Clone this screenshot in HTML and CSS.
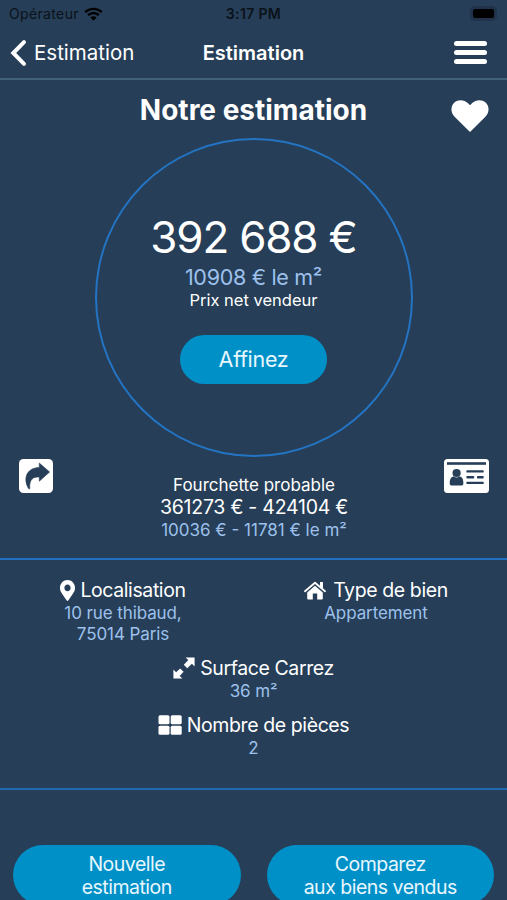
FILE: index.html
```html
<!DOCTYPE html>
<html lang="fr">
<head>
    <meta charset="UTF-8">
    <meta name="viewport" content="width=device-width, initial-scale=1.0">
    <title>Estimation</title>
    <link rel="stylesheet" href="styles.css">
</head>
<body>

<div class="status-bar">
    <div class="operator">
        <span>Opérateur</span>
        <svg width="19" height="14" viewBox="0 0 19 14">
            <path d="M1.2 5.2a12 12 0 0 1 16.6 0M4.1 8.2a7.8 7.8 0 0 1 10.8 0" fill="none" stroke="#000" stroke-width="2.4"/>
            <path d="M9.5 13.8l-3.1-3.2a4.5 4.5 0 0 1 6.2 0z"/>
        </svg>
    </div>
    <span class="time">3:17 PM</span>
    <div class="battery"><div class="battery-level"></div></div>
</div>

<nav class="navbar">
    <a class="back">
        <svg width="18" height="28" viewBox="0 0 18 28">
            <path d="M15 3.2L4.3 14 15 24.8" fill="none" stroke="#fff" stroke-width="4" stroke-linecap="round" stroke-linejoin="miter"/>
        </svg>
        <span>Estimation</span>
    </a>
    <span class="nav-title">Estimation</span>
    <div class="menu"><i></i><i></i><i></i></div>
</nav>

<header class="title-row">
    <h1>Notre estimation</h1>
    <svg class="heart" width="38" height="32" viewBox="0 0 38 32">
        <path d="M19 32L3.6 16.8C-.7 12.4-.4 5.8 3.4 2.5 7.4-1 13.3-.4 17 3.3L19 5.3l2-2C24.7-.4 30.6-1 34.6 2.5c3.8 3.3 4.1 9.9-.2 14.3z" fill="#fff"/>
    </svg>
</header>

<div class="circle">
    <div class="price">392 688 €</div>
    <div class="price-m2">10908 € le m²</div>
    <div class="net">Prix net vendeur</div>
    <button class="btn refine">Affinez</button>
</div>

<section class="range">
    <svg width="34" height="34" viewBox="0 0 34 34">
        <rect width="34" height="34" rx="4.5" fill="#fff"/>
        <path d="M20.3 4.1L30.6 13 20.3 22.2V18C14.5 17.6 10 20 10.8 29.7H9.7C4 20.5 6.8 8.8 20.3 8.4z" fill="#263e57" stroke="#263e57" stroke-width=".6" stroke-linejoin="round"/>
    </svg>
    <div class="range-text">
        <div class="range-label">Fourchette probable</div>
        <div class="range-price">361273 € - 424104 €</div>
        <div class="range-m2">10036 € - 11781 € le m²</div>
    </div>
    <svg width="45" height="34" viewBox="0 0 45 34">
        <rect width="45" height="34" rx="3.5" fill="#fff"/>
        <g fill="#263e57">
            <rect x="3" y="3.2" width="39" height="2.6"/>
            <path d="M5.7 24.5c0-4.5 1.5-7 4.3-7 1.6 1.2 3.6 1.2 5.2 0 2.8 0 4.2 2.5 4.2 7 0 1.3-.9 2.1-2 2.1H7.8c-1.2 0-2.1-.8-2.1-2.1z"/>
            <circle cx="12.6" cy="14" r="4.1"/>
            <rect x="22.4" y="11.2" width="17.3" height="2.4" rx=".7"/>
            <rect x="22.4" y="17" width="7.8" height="2.4" rx=".7"/>
            <rect x="33" y="17" width="6.7" height="2.4" rx=".7"/>
            <rect x="22.4" y="22.7" width="17.3" height="2.4" rx=".7"/>
        </g>
    </svg>
</section>

<section class="details">
    <div class="columns">
        <div class="detail">
            <h2>
                <svg width="15" height="21" viewBox="0 0 384 512" preserveAspectRatio="none">
                    <path d="M172.268 501.67C26.97 291.031 0 269.413 0 192 0 85.961 85.961 0 192 0s192 85.961 192 192c0 77.413-26.97 99.031-172.268 309.67-9.535 13.774-29.93 13.773-39.464 0zM192 272c44.183 0 80-35.817 80-80s-35.817-80-80-80-80 35.817-80 80 35.817 80 80 80z" fill="#fff"/>
                </svg>
                <span>Localisation</span>
            </h2>
            <p>10 rue thibaud,<br>75014 Paris</p>
        </div>
        <div class="detail">
            <h2 class="type">
                <svg width="22" height="19" viewBox="0 0 22 19" fill="#fff">
                    <path d="M11 4.8L18.8 11.5V17.5q0 1-1 1H13.2V12.5H8.8V18.5H4.2q-1 0-1-1V11.5z"/>
                    <path d="M1 10.2L11 1.7 21 10.2" fill="none" stroke="#fff" stroke-width="1.8" stroke-linecap="round" stroke-linejoin="round"/>
                    <path d="M16 1h3v7l-3-2.5z"/>
                </svg>
                <span>Type de bien</span>
            </h2>
            <p>Appartement</p>
        </div>
    </div>
    <div class="detail">
        <h2>
            <svg width="22" height="22" viewBox="0 0 22 22" fill="#fff">
                <path d="M12.6.4H21.6V9.4L18.9 6.7 14.2 11.2 10.8 7.8 15.3 3.1z"/>
                <path d="M9.4 21.6H.4V12.6L3.1 15.3 7.2 11.4 10.6 14.8 6.7 18.9z"/>
            </svg>
            <span>Surface Carrez</span>
        </h2>
        <p>36 m²</p>
    </div>
    <div class="detail">
        <h2>
            <svg width="24" height="20" viewBox="0 0 24 20" fill="#fff">
                <rect x=".5" y=".3" width="11" height="9" rx="1.5"/>
                <rect x="12.7" y=".3" width="11" height="9" rx="1.5"/>
                <rect x=".5" y="10.8" width="11" height="9" rx="1.5"/>
                <rect x="12.7" y="10.8" width="11" height="9" rx="1.5"/>
            </svg>
            <span>Nombre de pièces</span>
        </h2>
        <p>2</p>
    </div>
</section>

<div class="actions">
    <button class="btn">Nouvelle<br>estimation</button>
    <button class="btn">Comparez<br>aux biens vendus</button>
</div>

</body>
</html>
```
FILE: styles.css
```css
* {
    box-sizing: border-box;
}

body {
    margin: 0;
    height: 900px;
    overflow: hidden;
    background: #263e57;
    color: #fff;
    font-family: Inter, "Liberation Sans", sans-serif;
    text-align: center;
}

h1, h2, p {
    margin: 0;
}

svg {
    display: block;
    flex-shrink: 0;
}

.status-bar {
    display: grid;
    grid-template-columns: 1fr auto 1fr;
    align-items: center;
    height: 27px;
    padding: 0 9px;
    color: #0b121a;
    font-size: 14px;
    letter-spacing: 0.35px;
}

.operator {
    display: flex;
    align-items: center;
    gap: 5px;
}

.time {
    font-weight: 600;
}

.battery {
    justify-self: end;
    width: 27px;
    height: 15px;
    padding: 3px;
    margin: -1px 1px 0 0;
    border-radius: 5px;
    background: #20334a;
}

.battery-level {
    height: 9px;
    border-radius: 2px;
    background: #000;
}

.navbar {
    display: grid;
    grid-template-columns: 1fr auto 1fr;
    align-items: center;
    height: 53px;
    padding: 0 9px;
    border-bottom: 2px solid #42607a;
    font-size: 20.5px;
}

.back {
    display: flex;
    align-items: center;
    gap: 7px;
}

.nav-title {
    font-weight: 600;
    font-size: 20px;
}

.menu {
    justify-self: end;
    display: flex;
    flex-direction: column;
    gap: 4px;
    width: 33px;
    margin-right: 11px;
}

.menu i {
    height: 5.3px;
    border-radius: 3px;
    background: #fff;
}

.title-row {
    display: grid;
    grid-template-columns: 1fr auto 1fr;
    height: 58px;
    padding: 0 18px;
}

.title-row h1 {
    grid-column: 2;
    font-size: 28px;
    font-weight: 700;
    line-height: 60px;
}

.heart {
    justify-self: end;
    margin-top: 20px;
}

.circle {
    display: flex;
    flex-direction: column;
    align-items: center;
    width: 318px;
    height: 319px;
    margin: 0 auto;
    padding-top: 72px;
    border: 2px solid #2474c4;
    border-radius: 50%;
}

.price {
    font-size: 44px;
    line-height: 50px;
    letter-spacing: -1.2px;
}

.price-m2 {
    color: #9dc1ec;
    font-size: 21.5px;
    line-height: 30px;
    letter-spacing: -0.3px;
}

.net {
    font-size: 16.5px;
    line-height: 16px;
}

.btn {
    border: 0;
    border-radius: 30px;
    background: #0090c8;
    color: #e8f7fd;
    font-family: inherit;
    font-size: 19.5px;
    line-height: 23.5px;
    letter-spacing: -0.5px;
}

.refine {
    width: 147px;
    height: 49px;
    margin-top: 27px;
    font-size: 21.5px;
    letter-spacing: -0.3px;
}

.range {
    display: grid;
    grid-template-columns: 1fr auto 1fr;
    height: 103px;
    padding: 2px 18px 0 19px;
    border-bottom: 2px solid #2271c0;
}

.range > svg:last-child {
    justify-self: end;
}

.range-text {
    padding-top: 16px;
}

.range-label {
    font-size: 17px;
    line-height: 20px;
}

.range-price {
    font-size: 19.5px;
    line-height: 24px;
    letter-spacing: -0.25px;
}

.range-m2 {
    color: #9dc1ec;
    font-size: 17px;
    line-height: 22px;
}

.details {
    height: 230px;
    padding-top: 20px;
    border-bottom: 2px solid #2268b2;
}

.columns {
    display: grid;
    grid-template-columns: 246px 246px;
    gap: 7px;
}

.detail {
    margin-bottom: 13.5px;
}

.detail h2 {
    display: flex;
    justify-content: center;
    align-items: center;
    gap: 5px;
    height: 21px;
    font-size: 19.5px;
    font-weight: 400;
    line-height: 21px;
    letter-spacing: -0.4px;
}

.detail h2.type {
    gap: 7px;
}

.detail p {
    margin-top: 2px;
    color: #9dc1ec;
    font-size: 17px;
    line-height: 20.5px;
    letter-spacing: -0.1px;
}

.actions {
    display: grid;
    grid-template-columns: 1fr 1fr;
    gap: 26px;
    padding: 55px 13px 0;
}

.actions .btn {
    height: 60px;
    padding: 2px 0 0;
}
```
